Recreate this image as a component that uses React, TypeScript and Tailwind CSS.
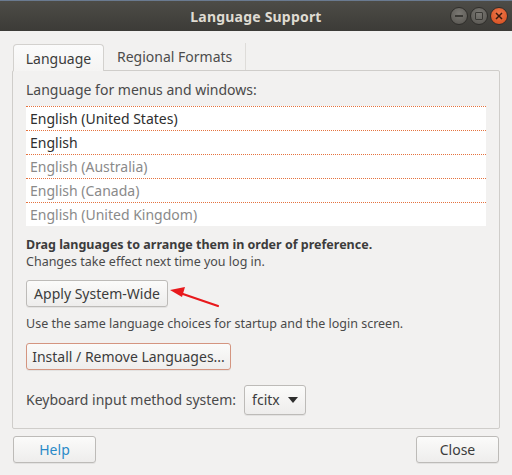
import React from "react";

const rows = [
  { name: "English (United States)", dim: false },
  { name: "English", dim: false },
  { name: "English (Australia)", dim: true },
  { name: "English (Canada)", dim: true },
  { name: "English (United Kingdom)", dim: true },
];

function WinButton({ kind }: { kind: "min" | "max" | "close" }) {
  const bg = kind === "close" ? "bg-[radial-gradient(circle_at_50%_35%,#f0774a,#d24b1c)]" : "bg-[radial-gradient(circle_at_50%_35%,#7a7873,#55534e)]";
  return (
    <div className={`w-[18px] h-[18px] rounded-full ${bg} border border-[#2f2e2b] flex items-center justify-center`}>
      {kind === "min" && <div className="w-[8px] h-[1.5px] bg-[#3a3935]" />}
      {kind === "max" && <div className="w-[8px] h-[8px] border-[1.5px] border-[#3a3935] rounded-[1px]" />}
      {kind === "close" && (
        <svg width="8" height="8" viewBox="0 0 8 8">
          <path d="M1 1L7 7M7 1L1 7" stroke="#3a1a0e" strokeWidth="1.5" />
        </svg>
      )}
    </div>
  );
}

function Btn({ children, className = "" }: { children: React.ReactNode; className?: string }) {
  return (
    <div className={`h-[27px] flex items-center justify-center rounded-[3px] border bg-gradient-to-b from-[#fbfbfa] to-[#eeedec] shadow-[0_1px_0_rgba(0,0,0,0.06)] ${className}`}>
      {children}
    </div>
  );
}

export default function App() {
  return (
    <div className="w-[512px] h-[475px] bg-[#f2f1f0] text-[14px] text-[#3c3c3c] overflow-hidden" style={{ fontFamily: '"Noto Sans", "DejaVu Sans", sans-serif' }}>
      {/* Title bar */}
      <div className="relative h-[31px] bg-gradient-to-b from-[#4d4c47] to-[#3c3b37] border-t border-[#6a7a90] flex items-center justify-center">
        <span className="text-[14px] font-bold text-[#dfdbd2] tracking-[0.2px]">Language Support</span>
        <div className="absolute right-[4px] top-[6px] flex gap-[2px]">
          <WinButton kind="min" />
          <WinButton kind="max" />
          <WinButton kind="close" />
        </div>
      </div>

      <div className="px-[12px] pt-[12px]">
        {/* Tabs */}
        <div className="flex items-end h-[27px]">
          <div className="w-[91px] h-[27px] ml-[1px] border border-b-0 border-[#d3d1ce] rounded-t-[4px] bg-gradient-to-b from-[#fbfbfb] to-[#f5f4f3] flex items-center justify-center text-[#3c3c3c] relative top-[1px] z-10">
            Language
          </div>
          <div className="h-[27px] px-[13px] flex items-center text-[#4c4c4c] border-r border-[#dedcd9]">Regional Formats</div>
        </div>

        {/* Panel */}
        <div className="h-[359px] border border-[#cfcdca] rounded-[2px] px-[13px] pt-[9px]">
          <div className="text-[#4a4a4a] leading-[20px]">Language for menus and windows:</div>
          <div className="mt-[6px] bg-white">
            {rows.map((r) => (
              <div key={r.name} className={`h-[24px] border-t-[1.5px] border-dotted border-[#e5733f] flex items-center pl-[4px] ${r.dim ? "text-[#8a8a8a]" : "text-[#2e2e2e]"}`}>
                {r.name}
              </div>
            ))}
          </div>

          <div className="mt-[10px] text-[12.5px] leading-[17px]">
            <div className="font-bold text-[#3c3c3c]">Drag languages to arrange them in order of preference.</div>
            <div className="text-[#4a4a4a]">Changes take effect next time you log in.</div>
          </div>

          <div className="relative mt-[10px]">
            <Btn className="w-[142px] border-[#bdbbb8] text-[#3c3c3c]">Apply System-Wide</Btn>
            <svg className="absolute left-[142px] top-0" width="60" height="30" viewBox="0 0 60 30">
              <path d="M50 26 L12 13" stroke="#e8191c" strokeWidth="2.2" strokeLinecap="round" />
              <path d="M2 10 L17 7 L14 17 Z" fill="#e8191c" />
            </svg>
          </div>
          <div className="mt-[8px] text-[12.5px] text-[#4a4a4a]">Use the same language choices for startup and the login screen.</div>

          <Btn className="mt-[9px] w-[205px] border-[#d49580] text-[#3c3c3c]">Install / Remove Languages...</Btn>

          <div className="mt-[15px] flex items-center gap-[8px]">
            <span className="text-[#4a4a4a]">Keyboard input method system:</span>
            <Btn className="w-[62px] h-[30px] border-[#bdbbb8] text-[#3c3c3c] gap-[8px] justify-start pl-[7px]">
              <span>fcitx</span>
              <svg width="10" height="6" viewBox="0 0 10 6"><path d="M0 0H10L5 6Z" fill="#2e2e2e" /></svg>
            </Btn>
          </div>
        </div>

        {/* Bottom buttons */}
        <div className="flex justify-between mt-[7px] px-[1px]">
          <Btn className="w-[83px] border-[#bdbbb8] text-[#2a8ac8]">Help</Btn>
          <Btn className="w-[83px] border-[#bdbbb8] text-[#3c3c3c]">Close</Btn>
        </div>
      </div>
    </div>
  );
}
